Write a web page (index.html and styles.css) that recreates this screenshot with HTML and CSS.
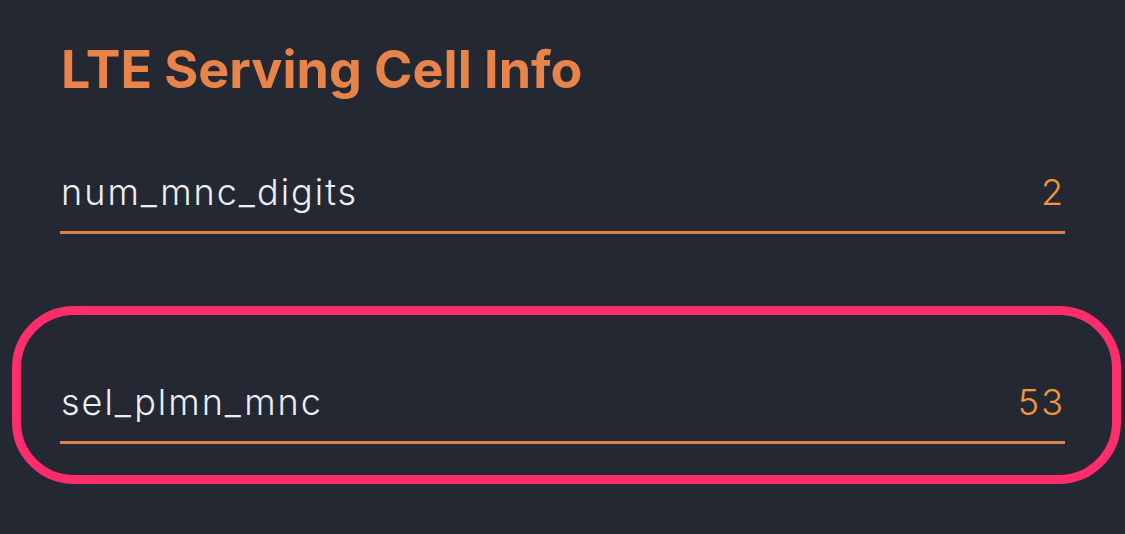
FILE: index.html
```html
<!DOCTYPE html>
<html lang="en">
<head>
    <meta charset="UTF-8">
    <meta name="viewport" content="width=device-width, initial-scale=1.0">
    <title>LTE Serving Cell Info</title>
    <link rel="stylesheet" href="styles.css">
</head>
<body>

    <div class="container">
        <h1>LTE Serving Cell Info</h1>

        <div class="info-row">
            <span class="info-key">num_mnc_digits</span>
            <span class="info-value">2</span>
        </div>

        <!-- highlighted row -->
        <div class="info-row highlight">
            <span class="info-key">sel_plmn_mnc</span>
            <span class="info-value">53</span>
        </div>
    </div>

</body>
</html>
```

FILE: styles.css
```css
body {
    font-family: 'Inter', 'Noto Sans', sans-serif;
    background-color: #232833;
    margin: 0;
    padding: 0;
    min-height: 534px;
}

.container {
    width: 1005px;
    padding: 40px 0 60px 60px;
}

h1 {
    font-size: 52px;
    font-weight: 700;
    color: #e8834a;
    margin: 0 0 70px 1px;
    line-height: 60px;
}

.info-row {
    display: flex;
    justify-content: space-between;
    align-items: baseline;
    border-bottom: 3px solid #d9824a;
    padding: 0 0 17px 1px;
    line-height: 44px;
}

.info-row + .info-row {
    margin-top: 146px;
}

.info-key {
    font-size: 36px;
    font-weight: 300;
    color: #eceef2;
    letter-spacing: 2px;
}

.info-value {
    font-size: 36px;
    font-weight: 300;
    color: #f0963a;
    letter-spacing: 2px;
}

.highlight {
    position: relative;
}

.highlight::before {
    content: "";
    position: absolute;
    top: -74px;
    bottom: -43px;
    left: -48px;
    right: -56px;
    border: 9px solid #ff2d6b;
    border-radius: 62px;
}
```
